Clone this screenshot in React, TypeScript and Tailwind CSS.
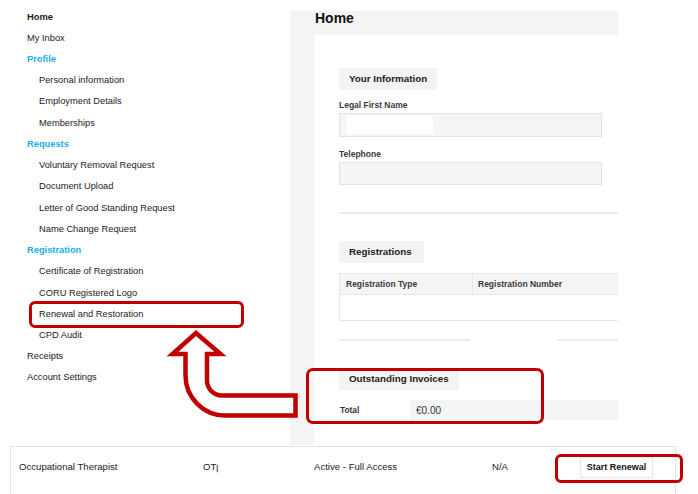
import React from 'react'

type NavItem = { label: string; kind: 'top' | 'bold' | 'section' | 'sub' }

const nav: NavItem[] = [
  { label: 'Home', kind: 'bold' },
  { label: 'My Inbox', kind: 'top' },
  { label: 'Profile', kind: 'section' },
  { label: 'Personal information', kind: 'sub' },
  { label: 'Employment Details', kind: 'sub' },
  { label: 'Memberships', kind: 'sub' },
  { label: 'Requests', kind: 'section' },
  { label: 'Voluntary Removal Request', kind: 'sub' },
  { label: 'Document Upload', kind: 'sub' },
  { label: 'Letter of Good Standing Request', kind: 'sub' },
  { label: 'Name Change Request', kind: 'sub' },
  { label: 'Registration', kind: 'section' },
  { label: 'Certificate of Registration', kind: 'sub' },
  { label: 'CORU Registered Logo', kind: 'sub' },
  { label: 'Renewal and Restoration', kind: 'sub' },
  { label: 'CPD Audit', kind: 'sub' },
  { label: 'Receipts', kind: 'top' },
  { label: 'Account Settings', kind: 'top' },
]

function navClass(kind: NavItem['kind']) {
  if (kind === 'bold') return 'pl-[27px] font-bold text-[#222]'
  if (kind === 'section') return 'pl-[27px] font-bold text-[#21aee6]'
  if (kind === 'sub') return 'pl-[39px] text-[#222]'
  return 'pl-[27px] text-[#222]'
}

function Tag({ children, width }: { children: React.ReactNode; width: string }) {
  return (
    <div className={`${width} h-[22px] bg-[#f3f3f3] pl-[10px] text-[9.8px] font-bold leading-[22px] text-[#222]`}>
      {children}
    </div>
  )
}

export default function App() {
  return (
    <div className="relative h-[494px] w-[698px] overflow-hidden bg-white font-['Liberation_Sans',Arial,sans-serif]">
      <div className="flex h-[446px]">
        {/* Sidebar */}
        <nav className="w-[290px] shrink-0 pt-[6.5px] text-[9.3px] leading-[21.24px]">
          {nav.map((item) => (
            <div key={item.label} className={navClass(item.kind)}>
              {item.label}
            </div>
          ))}
        </nav>

        {/* Main panel */}
        <main className="mt-[11px] h-[434px] w-[328px] bg-[#f4f4f4]">
          <div className="h-[24px] pl-[25px]">
            <h1 className="text-[14px] font-bold leading-[14px] text-[#111]">Home</h1>
          </div>
          <div className="ml-[24px] h-[410px] w-[304px] overflow-hidden bg-white pl-[25px] pt-[33px]">
            <Tag width="w-[98px]">Your Information</Tag>

            <div className="mt-[9px] text-[8.5px] font-bold leading-[12px] text-[#3a3a3a]">Legal First Name</div>
            <div className="mt-[2px] flex h-[24px] w-[263px] items-center border border-[#e2e2e2] bg-[#f5f5f5] pl-[6px]">
              <div className="h-[18px] w-[87px] bg-white" />
            </div>

            <div className="mt-[11px] text-[8.5px] font-bold leading-[12px] text-[#3a3a3a]">Telephone</div>
            <div className="mt-[2px] h-[23px] w-[263px] border border-[#e2e2e2] bg-[#f5f5f5]" />

            <div className="mt-[27px] h-[2px] w-[300px] bg-[#ececec]" />

            <div className="mt-[27px]">
              <Tag width="w-[85px]">Registrations</Tag>
            </div>

            <div className="mt-[10px] w-[320px] border border-[#e6e6e6]">
              <div className="flex h-[20px] bg-[#f5f5f5] text-[8.5px] font-bold leading-[20px] text-[#3a3a3a]">
                <div className="w-[133px] border-r border-[#e6e6e6] pl-[6px]">Registration Type</div>
                <div className="pl-[5px]">Registration Number</div>
              </div>
              <div className="h-[26px] border-t border-[#e6e6e6] bg-white" />
            </div>

            <div className="mt-[18px] flex w-[300px] gap-[87px]">
              <div className="h-[2px] w-[131px] bg-[#ececec]" />
              <div className="h-[2px] flex-1 bg-[#ececec]" />
            </div>

            <div className="mt-[27px]">
              <Tag width="w-[120px]">Outstanding Invoices</Tag>
            </div>

            <div className="mt-[10px] flex h-[20px] w-[300px] items-center">
              <div className="w-[71px] pl-[1px] text-[8.3px] font-bold text-[#333]">Total</div>
              <div className="flex h-full flex-1 items-center bg-[#f4f5f6] pl-[6px] text-[10px] text-[#333]">€0.00</div>
            </div>
          </div>
        </main>
      </div>

      {/* Registrations list row */}
      <div className="ml-[10px] h-[48px] w-[666px] border-x border-t border-[#e3e3e3]">
        <div className="flex h-[41px] items-center text-[9.6px] text-[#222]">
          <div className="w-[192px] pl-[8px]">Occupational Therapist</div>
          <div className="w-[111px]">OTꞁ</div>
          <div className="w-[178px]">Active - Full Access</div>
          <div className="w-[88px]">N/A</div>
          <button className="h-[21px] w-[73px] border border-[#e5e5e5] bg-white text-[9px] font-bold text-[#111]">
            Start Renewal
          </button>
        </div>
      </div>

      {/* Annotations */}
      <div className="absolute left-[29px] top-[301px] h-[27px] w-[215px] rounded-[6px] border-[3px] border-[#c00000]" />
      <div className="absolute left-[306px] top-[368px] h-[56px] w-[238px] rounded-[7px] border-[3px] border-[#c00000]" />
      <div className="absolute left-[555px] top-[454px] h-[29px] w-[128px] rounded-[6px] border-[3px] border-[#c00000]" />
      <svg className="pointer-events-none absolute left-0 top-0" width="698" height="494" viewBox="0 0 698 494">
        <path
          d="M196 333 L220.5 354 L207 354 L207 380.5 A15 15 0 0 0 222 395.5 L295.5 395.5 L295.5 415.5 L225.5 415.5 A40 40 0 0 1 185.5 375.5 L185.5 354 L172.5 354 Z"
          fill="white"
          stroke="#c00000"
          strokeWidth="4.5"
          strokeLinejoin="miter"
        />
      </svg>
    </div>
  )
}
